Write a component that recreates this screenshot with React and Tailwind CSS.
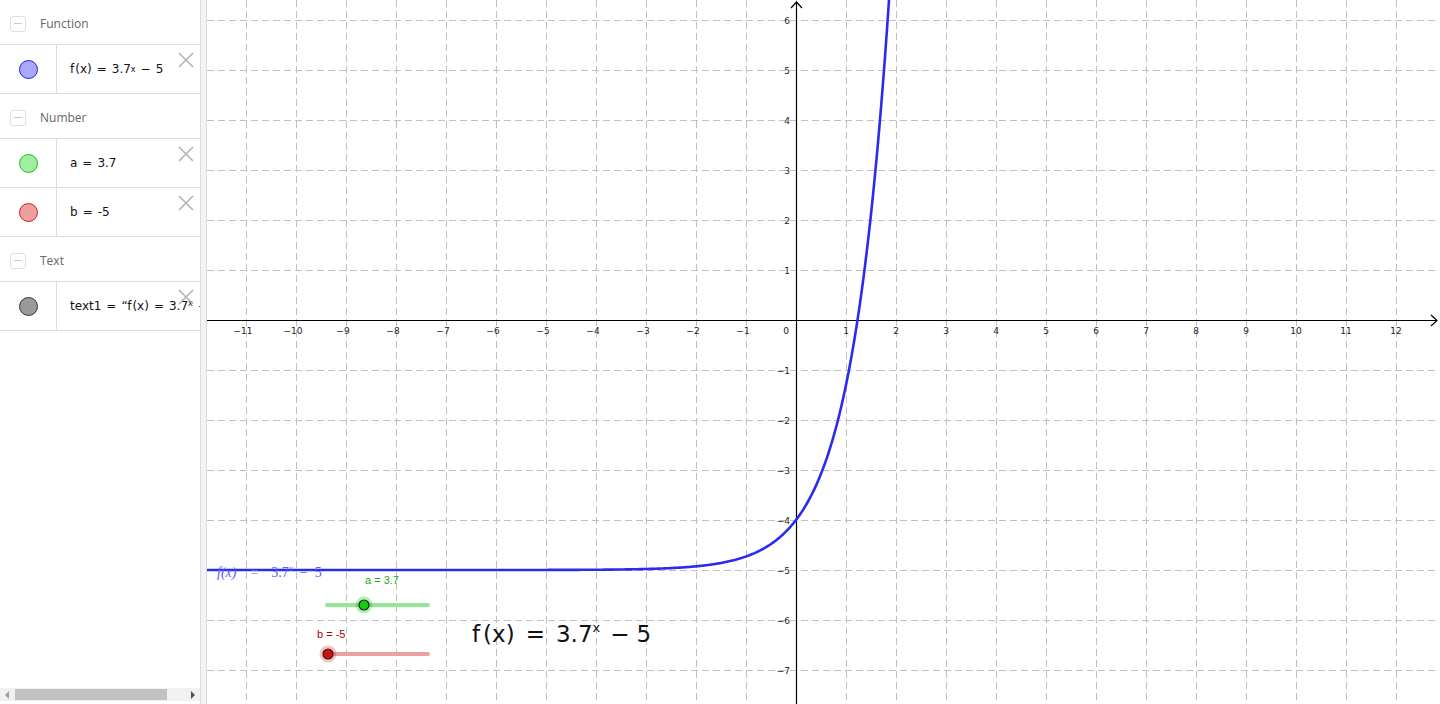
import React from "react";

const OX = 797;
const OY = 320;
const U = 50;
const X = (x) => OX + U * x;
const Y = (y) => OY - U * y;

function curvePath() {
  const pts = [];
  const x0 = (208 - OX) / U;
  const x1 = Math.log(6.5 + 5) / Math.log(3.7);
  const n = 600;
  for (let i = 0; i <= n; i++) {
    const x = x0 + ((x1 - x0) * i) / n;
    const y = Math.pow(3.7, x) - 5;
    pts.push(`${i === 0 ? "M" : "L"}${X(x).toFixed(2)},${Y(y).toFixed(2)}`);
  }
  return pts.join(" ");
}

function Minus() {
  return (
    <div className="w-[16px] h-[16px] rounded-[3px] border border-[#e0e0e0] flex items-center justify-center">
      <div className="w-[8px] h-[1px] bg-[#c8c8c8]" />
    </div>
  );
}

function Header({ label }) {
  return (
    <div className="flex items-center gap-[14px] pl-[10px] pt-[3px] border-b border-[#dcdcdc] h-[45px]">
      <Minus />
      <span className="text-[12px] text-[#666]" style={{ fontFamily: '"Open Sans", sans-serif' }}>
        {label}
      </span>
    </div>
  );
}

function Close() {
  return (
    <svg width="18" height="18" viewBox="0 0 18 18" className="absolute right-[5px] top-[6px]">
      <path d="M2 2 L16 16 M16 2 L2 16" stroke="#b4b4b4" strokeWidth="1.6" />
    </svg>
  );
}

function Item({ fill, stroke, children }) {
  return (
    <div className="relative flex h-[49px] border-b border-[#dcdcdc]">
      <div className="w-[57px] border-r border-[#dcdcdc] flex items-center justify-center shrink-0">
        <div
          className="w-[19px] h-[19px] rounded-full border"
          style={{ background: fill, borderColor: stroke }}
        />
      </div>
      <div
        className="flex-1 flex items-center pl-[13px] overflow-hidden whitespace-nowrap text-[12px] text-[#111]"
        style={{ fontFamily: '"DejaVu Sans", sans-serif' }}
      >
        {children}
      </div>
      <Close />
    </div>
  );
}

const Eq = () => <span className="mx-[5px]">=</span>;

export default function App() {
  const vlines = [];
  for (let k = -11; k <= 12; k++) vlines.push(X(k));
  const hlines = [];
  for (let k = 6; k >= -7; k--) hlines.push(Y(k));

  const xl = [];
  for (let k = -11; k <= 12; k++) if (k !== 0) xl.push(k);
  const yl = [];
  for (let k = 6; k >= -7; k--) if (k !== 0) yl.push(k);
  const fmt = (k) => (k < 0 ? "\u2212" + Math.abs(k) : String(k));

  return (
    <div
      className="w-[1440px] h-[704px] flex bg-white overflow-hidden"
      style={{ fontFamily: '"Open Sans", "DejaVu Sans", sans-serif' }}
    >
      {/* Algebra panel */}
      <div className="w-[201px] shrink-0 flex flex-col border-r border-[#dcdcdc] relative">
        <Header label="Function" />
        <Item fill="#a8a8ff" stroke="#2020e0">
          <span>f</span>
          <span className="ml-[1px]">(x)</span>
          <Eq />
          <span>
            3.7<sup className="text-[8px] relative -top-[1px]">x</sup>
          </span>
          <span className="ml-[5px]">{"\u2212"}</span>
          <span className="ml-[5px]">5</span>
        </Item>
        <Header label="Number" />
        <Item fill="#9fef9f" stroke="#22bb22">
          <span>a</span>
          <Eq />
          <span>3.7</span>
        </Item>
        <Item fill="#ee9e9e" stroke="#cc2222">
          <span>b</span>
          <Eq />
          <span>-5</span>
        </Item>
        <Header label="Text" />
        <Item fill="#999999" stroke="#333333">
          <span>text1</span>
          <Eq />
          <span>“f</span>
          <span className="ml-[1px]">(x)</span>
          <Eq />
          <span>
            3.7<sup className="text-[8px]">x</sup>
          </span>
          <span className="ml-[5px]">{"\u2212"}</span>
          <span className="ml-[5px]">5”</span>
        </Item>
        <div className="flex-1" />
        {/* scrollbar */}
        <div className="h-[13px] mb-[3px] bg-[#f1f1f1] flex items-center px-[3px] gap-[4px]">
          <svg width="8" height="10" viewBox="0 0 8 10">
            <path d="M6 1 L2 5 L6 9 Z" fill="#a0a0a0" />
          </svg>
          <div className="w-[152px] h-[11px] bg-[#c1c1c1]" />
          <div className="flex-1" />
          <svg width="8" height="10" viewBox="0 0 8 10">
            <path d="M2 1 L6 5 L2 9 Z" fill="#505050" />
          </svg>
        </div>
      </div>
      {/* splitter */}
      <div className="w-[6px] shrink-0 bg-[#f3f3f3] border-r border-[#dcdcdc]" />

      {/* Graphics view */}
      <div className="flex-1 relative">
        <svg width="1232" height="704" viewBox="208 0 1232 704" className="block">
          <g stroke="#c0c0c0" strokeWidth="1" strokeDasharray="7 4">
            {vlines.map((x) => (
              <line key={"v" + x} x1={x + 0.5} y1={0} x2={x + 0.5} y2={704} />
            ))}
            {hlines.map((y) => (
              <line key={"h" + y} x1={208} y1={y + 0.5} x2={1440} y2={y + 0.5} />
            ))}
          </g>
          {/* axes */}
          <g stroke="#000" strokeWidth="1.2" fill="none">
            <line x1={208} y1={OY + 0.5} x2={1438} y2={OY + 0.5} />
            <path d={`M1432 ${OY - 5} L1438 ${OY + 0.5} L1432 ${OY + 6}`} />
            <line x1={OX + 0.5} y1={2} x2={OX + 0.5} y2={704} />
            <path d={`M${OX - 5} 8 L${OX + 0.5} 2 L${OX + 6} 8`} />
          </g>
          <g fontFamily='"DejaVu Sans", sans-serif' fontSize="9" fill="#222">
            {xl.map((k) => (
              <text key={"xl" + k} x={X(k) + (k < 0 ? -3 : 0)} y={OY + 14} textAnchor="middle">
                {fmt(k)}
              </text>
            ))}
            <text x={OX - 10} y={OY + 14} textAnchor="middle">0</text>
            {yl.map((k) => (
              <text key={"yl" + k} x={OX - 6} y={Y(k) + 3.5} textAnchor="end">
                {fmt(k)}
              </text>
            ))}
          </g>
          {/* curve */}
          <path d={curvePath()} stroke="#2b2bf0" strokeWidth="2.6" fill="none" strokeLinejoin="round" />
          {/* curve label */}
          <text
            x={218}
            y={577}
            fontFamily='"Liberation Serif", serif'
            fontStyle="italic"
            fontSize="14"
            fill="#5c5cff"
          >
            f(x)
            <tspan dx="14" fontStyle="normal">=</tspan>
            <tspan dx="13" fontStyle="normal">3.7</tspan>
            <tspan dy="-6" fontSize="9">x</tspan>
            <tspan dy="6" dx="7" fontStyle="normal">{"\u2212"}</tspan>
            <tspan dx="7" fontStyle="normal">5</tspan>
          </text>

          {/* slider a */}
          <line x1={328} y1={605} x2={429} y2={605} stroke="#93e693" strokeWidth="4" strokeLinecap="round" />
          <circle cx={365} cy={605} r={8.5} fill="#00cc00" opacity="0.3" />
          <circle cx={365} cy={605} r={5} fill="#11cc11" stroke="#222" strokeWidth="1.2" />
          <text x={366} y={584} fontFamily='"Liberation Sans", sans-serif' fontSize="11" fill="#22aa22">
            a = 3.7
          </text>

          {/* slider b */}
          <line x1={330} y1={654} x2={429} y2={654} stroke="#eea0a0" strokeWidth="4" strokeLinecap="round" />
          <circle cx={329} cy={654} r={8.5} fill="#dd3333" opacity="0.3" />
          <circle cx={329} cy={654} r={5} fill="#cc1111" stroke="#222" strokeWidth="1.2" />
          <text x={318} y={638} fontFamily='"Liberation Sans", sans-serif' fontSize="11" fill="#aa0000">
            b = -5
          </text>

          {/* big text */}
          <text x={473} y={642} fontFamily='"DejaVu Sans", sans-serif' fontSize="23" fill="#111">
            f
            <tspan dx="3">(x)</tspan>
            <tspan dx="11">=</tspan>
            <tspan dx="11">3.7</tspan>
            <tspan dy="-10" fontSize="13">x</tspan>
            <tspan dy="10" dx="10">{"\u2212"}</tspan>
            <tspan dx="7">5</tspan>
          </text>
        </svg>
      </div>
    </div>
  );
}
